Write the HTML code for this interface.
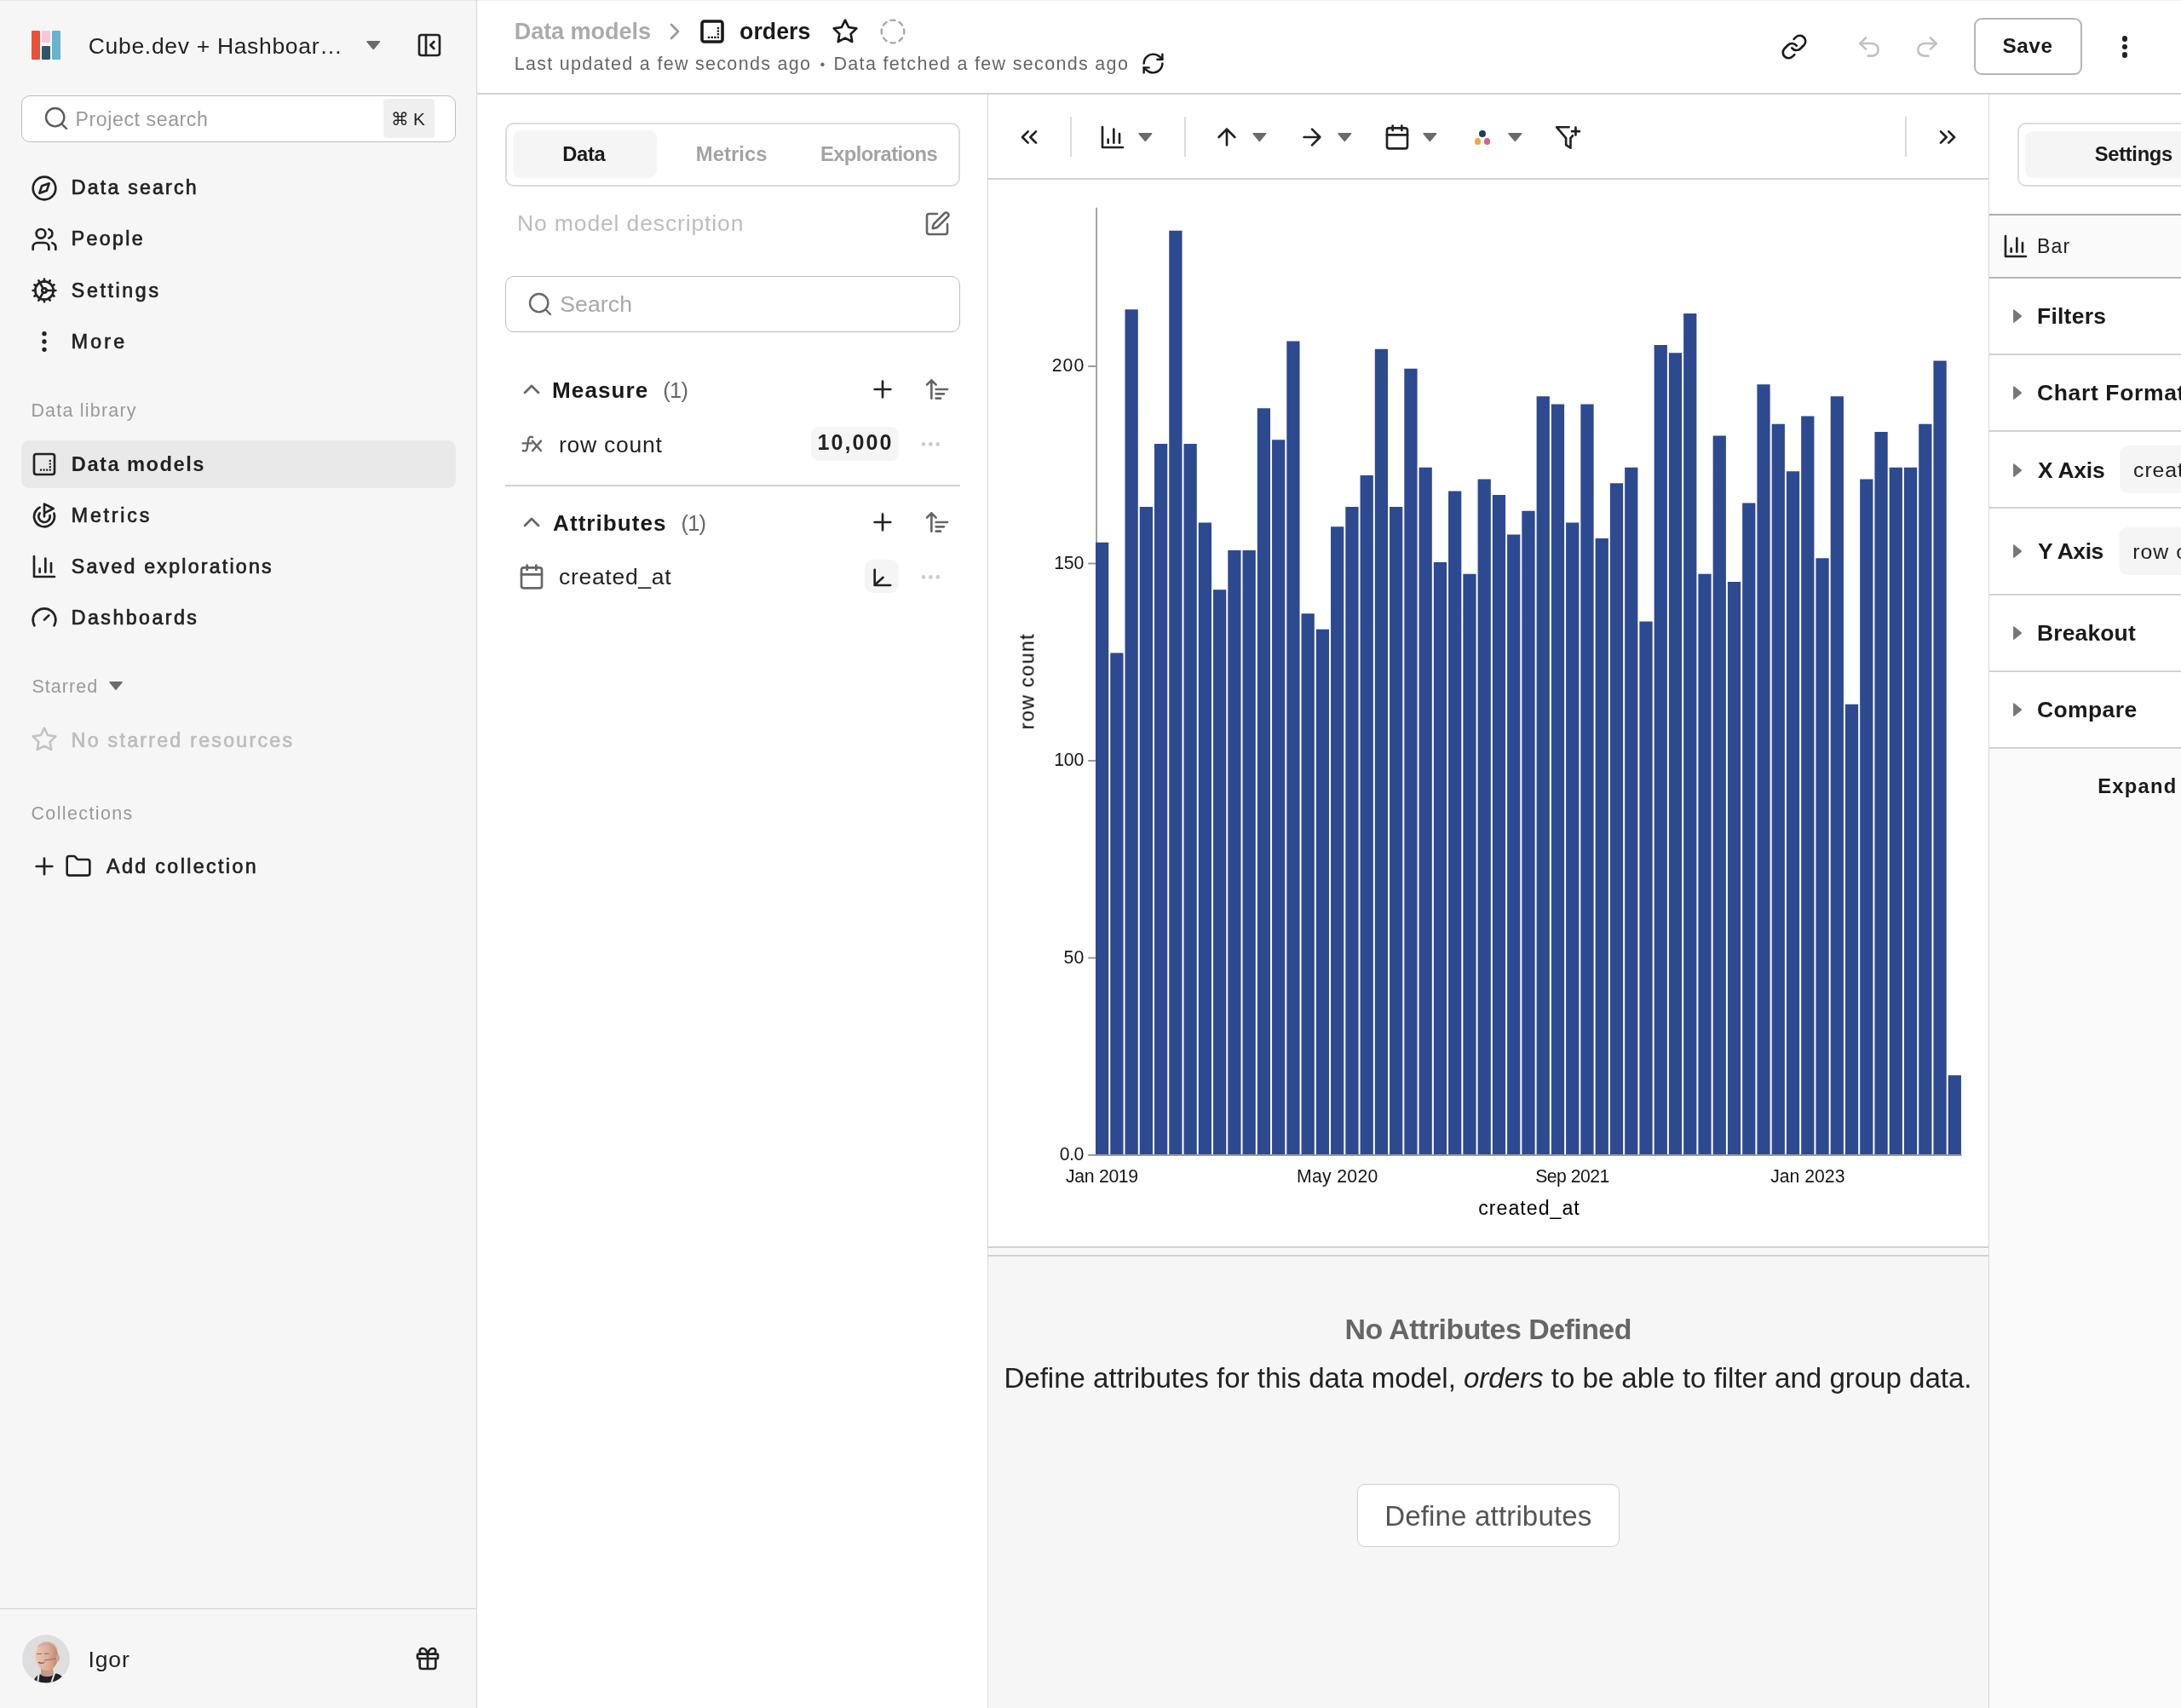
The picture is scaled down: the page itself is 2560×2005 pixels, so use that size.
<!DOCTYPE html>
<html lang="en"><head><meta charset="utf-8"><title>orders – Data models</title>
<style>
html,body{margin:0;padding:0}
body{width:2560px;height:2005px;position:relative;overflow:hidden;background:#fff;font-family:"Liberation Sans","DejaVu Sans",sans-serif;}
body div,body svg,body span{position:absolute}
#app{left:0;top:0;width:2560px;height:2005px;will-change:transform}
.t{white-space:nowrap;line-height:1;}
i{font-style:italic}
</style></head>
<body>
<div id="app">
<div style="left:0px;top:0px;width:559px;height:2005px;background:#f6f6f6"></div>
<div style="left:559px;top:0px;width:1px;height:2005px;background:#d9d9d9"></div>
<div style="left:560px;top:109px;width:2000px;height:2px;background:#d2d2d2"></div>
<div style="left:1159px;top:111px;width:1px;height:1894px;background:#d9d9d9"></div>
<div style="left:2334px;top:111px;width:1px;height:1894px;background:#d9d9d9"></div>
<div style="left:1160px;top:209px;width:1174px;height:2px;background:#d2d2d2"></div>
<div style="left:1160px;top:1463px;width:1174px;height:2px;background:#d2d2d2"></div>
<div style="left:1160px;top:1465px;width:1174px;height:8px;background:#f7f7f7"></div>
<div style="left:1160px;top:1473px;width:1174px;height:2px;background:#d2d2d2"></div>
<div style="left:1160px;top:1475px;width:1174px;height:530px;background:#f6f6f6"></div>
<div style="left:37.1px;top:36px;width:9.8px;height:34px;background:#ea5038;border-radius:1.3px"></div>
<div style="left:49.2px;top:36px;width:9.8px;height:14.3px;background:#f7c6d8;border-radius:1.3px"></div>
<div style="left:49.2px;top:53.7px;width:9.8px;height:16.3px;background:#2e5568;border-radius:1.3px"></div>
<div style="left:61.1px;top:36px;width:9.8px;height:34px;background:#68b3cd;border-radius:1.3px"></div>
<span id="ws" class="t" style="left:103.80px;top:41px;font-size:26.5px;color:#222;letter-spacing:0.677px;">Cube.dev + Hashboar…</span>
<svg style="left:428.8px;top:46.9px" width="18.5" height="12.1" viewBox="-1 -1 18.5 12.1"><path d="M1 0.8H15.5L8.25 9.4Z" fill="#6b6b6b" stroke="#6b6b6b" stroke-width="1.5" stroke-linejoin="round"/></svg>
<svg style="left:488.3px;top:36.9px" width="32" height="32" viewBox="0 0 24 24" fill="none" stroke="#222" stroke-width="2" stroke-linecap="round" stroke-linejoin="round"><rect x="3" y="3" width="18" height="18" rx="2"/><path d="M9 3v18M16 15l-3-3 3-3"/></svg>
<div style="left:24.5px;top:111.5px;width:510px;height:55px;background:#fff;border:1.5px solid #bdbdbd;border-radius:10px;box-sizing:border-box"></div>
<svg style="left:50.1px;top:122.9px" width="32" height="32" viewBox="0 0 24 24" fill="none" stroke="#5c5c5c" stroke-width="1.8" stroke-linecap="round" stroke-linejoin="round"><circle cx="11" cy="11" r="8"/><path d="M21 21l-4.3-4.3"/></svg>
<span id="psearch" class="t" style="left:88.50px;top:129px;font-size:23.18px;color:#9a9a9a;letter-spacing:0.560px;">Project search</span>
<div style="left:450px;top:116.2px;width:60px;height:45.5px;background:#efefef;border-radius:4px"></div>
<span id="cmdk" class="t" style="left:459.00px;top:130px;font-size:20.8px;color:#222;letter-spacing:-0.287px;">⌘ K</span>
<span id="n1" class="t" style="left:83.80px;top:209px;font-size:23.18px;color:#222;-webkit-text-stroke:0.7px currentColor;letter-spacing:2.195px;">Data search</span>
<svg style="left:36.3px;top:204.6px" width="32" height="32" viewBox="0 0 24 24" fill="none" stroke="#222" stroke-width="2" stroke-linecap="round" stroke-linejoin="round"><circle cx="12" cy="12" r="10"/><path d="M16.24 7.76l-2.12 6.36-6.36 2.12 2.12-6.36z"/></svg>
<span id="n2" class="t" style="left:83.80px;top:269px;font-size:23.18px;color:#222;-webkit-text-stroke:0.7px currentColor;letter-spacing:2.327px;">People</span>
<svg style="left:36.3px;top:265.2px" width="32" height="32" viewBox="0 0 24 24" fill="none" stroke="#222" stroke-width="2" stroke-linecap="round" stroke-linejoin="round"><path d="M16 21v-2a4 4 0 0 0-4-4H6a4 4 0 0 0-4 4v2"/><circle cx="9" cy="7" r="4"/><path d="M22 21v-2a4 4 0 0 0-3-3.87M16 3.13a4 4 0 0 1 0 7.75"/></svg>
<span id="n3" class="t" style="left:83.80px;top:330px;font-size:23.18px;color:#222;-webkit-text-stroke:0.7px currentColor;letter-spacing:2.637px;">Settings</span>
<svg style="left:36.3px;top:324.6px" width="32" height="32" viewBox="0 0 24 24" fill="none" stroke="#222" stroke-width="2" stroke-linecap="round" stroke-linejoin="round"><path d="M12 20a8 8 0 1 0 0-16 8 8 0 0 0 0 16z"/><path d="M12 14a2 2 0 1 0 0-4 2 2 0 0 0 0 4z"/><path d="M12 2v2M12 22v-2M17 20.66l-1-1.73M11 10.27L7 3.34M20.66 17l-1.73-1M3.34 7l1.73 1M14 12h8M2 12h2M20.66 7l-1.73 1M3.34 17l1.73-1M17 3.34l-1 1.73M11 13.73l-4 6.93"/></svg>
<span id="n4" class="t" style="left:83.80px;top:390px;font-size:23.18px;color:#222;-webkit-text-stroke:0.7px currentColor;letter-spacing:3.165px;">More</span>
<svg style="left:36.3px;top:384.6px" width="32" height="32" viewBox="0 0 24 24" fill="#222" stroke="#222" stroke-width="2" stroke-linecap="round" stroke-linejoin="round"><circle cx="12" cy="5" r="1"/><circle cx="12" cy="12" r="1"/><circle cx="12" cy="19" r="1"/></svg>
<span id="sec1" class="t" style="left:36.40px;top:472px;font-size:21.53px;color:#999;letter-spacing:1.196px;">Data library</span>
<div style="left:24.5px;top:517px;width:510.5px;height:55.5px;background:#e9e9e9;border-radius:9px"></div>
<span id="n5" class="t" style="left:83.80px;top:534px;font-size:23.74px;color:#222;font-weight:bold;letter-spacing:1.447px;">Data models</span>
<svg style="left:36.3px;top:529px" width="32" height="32" viewBox="0 0 24 24" fill="none" stroke="#222" stroke-width="2" stroke-linecap="round" stroke-linejoin="round"><rect x="3" y="3" width="18" height="18" rx="2"/><path d="M9 17h.01M11.7 17h.01M14.4 17h.01M17.1 17h.01M17.1 14.3h.01M17.1 11.6h.01M17.1 8.9h.01" stroke-linecap="square" stroke-linejoin="miter" stroke-width="1.6"/></svg>
<span id="n6" class="t" style="left:83.80px;top:594px;font-size:23.18px;color:#222;-webkit-text-stroke:0.7px currentColor;letter-spacing:2.804px;">Metrics</span>
<svg style="left:36.3px;top:589px" width="32" height="32" viewBox="0 0 24 24" fill="none" stroke="#222" stroke-width="2" stroke-linecap="round" stroke-linejoin="round"><path d="M12 13V2l8 4-8 4"/><path d="M20.56 10.22a9 9 0 1 1-12.55-5.29"/><path d="M8 10a5 5 0 1 0 8.9 2.02"/></svg>
<span id="n7" class="t" style="left:83.80px;top:654px;font-size:23.18px;color:#222;-webkit-text-stroke:0.7px currentColor;letter-spacing:2.218px;">Saved explorations</span>
<svg style="left:36.3px;top:649px" width="32" height="32" viewBox="0 0 24 24" fill="none" stroke="#222" stroke-width="2" stroke-linecap="round" stroke-linejoin="round"><path d="M3 3v18h18"/><path d="M18 17V9M13 17V5M8 17v-3"/></svg>
<span id="n8" class="t" style="left:83.80px;top:714px;font-size:23.18px;color:#222;-webkit-text-stroke:0.7px currentColor;letter-spacing:2.460px;">Dashboards</span>
<svg style="left:36.3px;top:709px" width="32" height="32" viewBox="0 0 24 24" fill="none" stroke="#222" stroke-width="2" stroke-linecap="round" stroke-linejoin="round"><path d="M12 14l4-4"/><path d="M3.34 19a10 10 0 1 1 17.32 0"/></svg>
<span id="sec2" class="t" style="left:37.40px;top:796px;font-size:21.53px;color:#999;letter-spacing:1.035px;">Starred</span>
<svg style="left:127px;top:799px" width="18" height="12" viewBox="-1 -1 18 12"><path d="M1 0.8H15L8 9.3Z" fill="#6b6b6b" stroke="#6b6b6b" stroke-width="1.5" stroke-linejoin="round"/></svg>
<svg style="left:36px;top:852.4px" width="32" height="32" viewBox="0 0 24 24" fill="none" stroke="#c4c4c4" stroke-width="2" stroke-linecap="round" stroke-linejoin="round"><path d="M12 2l3.09 6.26L22 9.27l-5 4.87 1.18 6.88L12 17.77l-6.18 3.25L7 14.14 2 9.27l6.91-1.01z"/></svg>
<span id="n9" class="t" style="left:83.80px;top:858px;font-size:23.18px;color:#bdbdbd;-webkit-text-stroke:0.7px currentColor;letter-spacing:2.254px;">No starred resources</span>
<span id="sec3" class="t" style="left:36.40px;top:945px;font-size:21.53px;color:#999;letter-spacing:1.372px;">Collections</span>
<svg style="left:36.2px;top:1001px" width="32" height="32" viewBox="0 0 24 24" fill="none" stroke="#222" stroke-width="2" stroke-linecap="round" stroke-linejoin="round"><path d="M5 12h14M12 5v14"/></svg>
<svg style="left:76px;top:1000.6px" width="32" height="32" viewBox="0 0 24 24" fill="none" stroke="#222" stroke-width="2" stroke-linecap="round" stroke-linejoin="round"><path d="M20 20a2 2 0 0 0 2-2V8a2 2 0 0 0-2-2h-7.9a2 2 0 0 1-1.69-.9L9.6 3.9A2 2 0 0 0 7.93 3H4a2 2 0 0 0-2 2v13a2 2 0 0 0 2 2z"/></svg>
<span id="addc" class="t" style="left:125.10px;top:1006px;font-size:23.18px;color:#222;-webkit-text-stroke:0.7px currentColor;letter-spacing:2.401px;">Add collection</span>
<div style="left:0px;top:1888px;width:559px;height:1px;background:#d1d1d1"></div>
<svg style="left:26px;top:1919px" width="56" height="56.6" viewBox="0 0 56 56.6"><defs><clipPath id="avc"><ellipse cx="28" cy="28.3" rx="28" ry="28.3"/></clipPath><linearGradient id="avs" x1="0" x2="1" y1="0" y2="0"><stop offset="0" stop-color="#ecc6b6"/><stop offset="0.55" stop-color="#dcae9b"/><stop offset="1" stop-color="#b98770"/></linearGradient></defs><g clip-path="url(#avc)"><rect width="56" height="57" fill="#dedee0"/><path d="M13 57c1-7 5-10 10-11l12-1c6 0 11 2 13 6l2 6z" fill="#1f2229"/><path d="M22 39h14l1 8c-4 3-11 3-15 0z" fill="#c89883"/><ellipse cx="28.8" cy="25.5" rx="13.3" ry="16.6" fill="url(#avs)"/><path d="M17 16c2-6 8-8.5 13-8 7 .6 11 5 12 11-3-4-7-6-12-6.5-5-.4-10 .7-13 3.500z" fill="#c9a08d" opacity=".55"/><ellipse cx="41.6" cy="27.5" rx="2.3" ry="4" fill="#d3a28e"/><path d="M19.500 32.500c2 1.200 4 1.200 6 .2" stroke="#9c5a4e" stroke-width="1.500" fill="none" stroke-linecap="round"/><path d="M17.500 22.500h5M26 22.300h5" stroke="#8a6657" stroke-width="1.100" fill="none" stroke-linecap="round"/><path d="M26 30l14-2" stroke="#7a5a50" stroke-width=".8" fill="none"/><path d="M19.500 47l-1.500 10M38.500 44l-4.500 13" stroke="#e9e9ec" stroke-width="2" fill="none"/></g></svg>
<span id="igor" class="t" style="left:103.40px;top:1935px;font-size:26.5px;color:#222;letter-spacing:0.920px;">Igor</span>
<svg style="left:486.2px;top:1931.1px" width="32" height="32" viewBox="0 0 24 24" fill="none" stroke="#222" stroke-width="2" stroke-linecap="round" stroke-linejoin="round"><rect x="3" y="8" width="18" height="4" rx="1"/><path d="M12 8v13M19 12v7a2 2 0 0 1-2 2H7a2 2 0 0 1-2-2v-7"/><path d="M7.5 8a2.5 2.5 0 0 1 0-5A4.8 8 0 0 1 12 8a4.8 8 0 0 1 4.5-5 2.5 2.5 0 0 1 0 5"/></svg>
<span id="bc1" class="t" style="left:603.70px;top:23px;font-size:27.14px;color:#ababab;font-weight:bold;letter-spacing:-0.091px;">Data models</span>
<svg style="left:776.1px;top:21.1px" width="32" height="32" viewBox="0 0 24 24" fill="none" stroke="#999" stroke-width="2" stroke-linecap="round" stroke-linejoin="round"><path d="M9 18l6-6-6-6"/></svg>
<svg style="left:820px;top:20.8px" width="32" height="32" viewBox="0 0 24 24" fill="none" stroke="#1a1a1a" stroke-width="2.7" stroke-linecap="round" stroke-linejoin="round"><rect x="3" y="3" width="18" height="18" rx="2"/><path d="M9 17.1h.01M11.8 17.1h.01M14.5 17.1h.01M17.2 17.1h.01M17.2 14.4h.01M17.2 11.7h.01M17.2 9h.01" stroke-linecap="square" stroke-linejoin="miter" stroke-width="1.75"/></svg>
<span id="bc2" class="t" style="left:868.10px;top:24px;font-size:26.71px;color:#1a1a1a;font-weight:bold;letter-spacing:0.029px;">orders</span>
<svg style="left:976.2px;top:21.2px" width="32" height="32" viewBox="0 0 24 24" fill="none" stroke="#1a1a1a" stroke-width="2" stroke-linecap="round" stroke-linejoin="round"><path d="M12 2l3.09 6.26L22 9.27l-5 4.87 1.18 6.88L12 17.77l-6.18 3.25L7 14.14 2 9.27l6.91-1.01z"/></svg>
<svg style="left:1031.9px;top:21px" width="32" height="32" viewBox="0 0 24 24" fill="none" stroke="#a8a8a8" stroke-width="1.8" stroke-linecap="round" stroke-linejoin="round"><path d="M10.1 2.18a10 10 0 0 1 3.8 0M13.9 21.82a10 10 0 0 1-3.8 0M17.61 3.72a10 10 0 0 1 2.69 2.7M2.18 13.9a10 10 0 0 1 0-3.8M20.28 17.61a10 10 0 0 1-2.7 2.69M21.82 10.1a10 10 0 0 1 0 3.8M3.72 6.39a10 10 0 0 1 2.7-2.69M6.39 20.28a10 10 0 0 1-2.69-2.7"/></svg>
<span id="sub1" class="t" style="left:603.70px;top:65px;font-size:21.53px;color:#666;letter-spacing:1.291px;">Last updated a few seconds ago</span>
<span id="subdot" class="t" style="left:962.40px;top:68px;font-size:16.56px;color:#666;">•</span>
<span id="sub2" class="t" style="left:978.50px;top:65px;font-size:21.53px;color:#666;letter-spacing:1.309px;">Data fetched a few seconds ago</span>
<svg style="left:1338.9px;top:59.7px" width="29" height="29" viewBox="0 0 24 24" fill="none" stroke="#1a1a1a" stroke-width="2" stroke-linecap="round" stroke-linejoin="round"><path d="M3 12a9 9 0 0 1 9-9 9.75 9.75 0 0 1 6.74 2.74L21 8"/><path d="M21 3v5h-5"/><path d="M21 12a9 9 0 0 1-9 9 9.75 9.75 0 0 1-6.74-2.74L3 16"/><path d="M8 16H3v5"/></svg>
<svg style="left:2090px;top:38.8px" width="32" height="32" viewBox="0 0 24 24" fill="none" stroke="#1a1a1a" stroke-width="2" stroke-linecap="round" stroke-linejoin="round"><path d="M10 13a5 5 0 0 0 7.54.54l3-3a5 5 0 0 0-7.07-7.07l-1.72 1.71"/><path d="M14 11a5 5 0 0 0-7.54-.54l-3 3a5 5 0 0 0 7.07 7.07l1.71-1.71"/></svg>
<svg style="left:2178px;top:39px" width="32" height="32" viewBox="0 0 24 24" fill="none" stroke="#c2c2c2" stroke-width="2" stroke-linecap="round" stroke-linejoin="round"><path d="M9 14L4 9l5-5"/><path d="M4 9h10.5a5.5 5.5 0 0 1 0 11H11"/></svg>
<svg style="left:2246px;top:39px" width="32" height="32" viewBox="0 0 24 24" fill="none" stroke="#c2c2c2" stroke-width="2" stroke-linecap="round" stroke-linejoin="round"><path d="M15 14l5-5-5-5"/><path d="M20 9H9.5a5.5 5.5 0 0 0 0 11H13"/></svg>
<div style="left:2316.5px;top:21px;width:127px;height:66.5px;background:#fff;border:2px solid #b5b5b5;border-radius:9px;box-sizing:border-box"></div>
<span id="save" class="t" style="left:2350.60px;top:42px;font-size:24.38px;color:#1a1a1a;font-weight:bold;letter-spacing:0.477px;">Save</span>
<div style="left:2490.6px;top:42px;width:6.8px;height:6.8px;background:#222;border-radius:50%"></div>
<div style="left:2490.6px;top:51.6px;width:6.8px;height:6.8px;background:#222;border-radius:50%"></div>
<div style="left:2490.6px;top:61.2px;width:6.8px;height:6.8px;background:#222;border-radius:50%"></div>
<div style="left:592.5px;top:143.5px;width:534px;height:75px;background:#fff;border:2px solid #dcdcdc;border-radius:10px;box-sizing:border-box"></div>
<div style="left:602px;top:153.3px;width:169px;height:55.5px;background:#f5f5f5;border-radius:9px"></div>
<span id="tab1" class="t" style="left:660.30px;top:170px;font-size:23.74px;color:#1a1a1a;font-weight:bold;letter-spacing:-0.381px;">Data</span>
<span id="tab2" class="t" style="left:816.80px;top:170px;font-size:23.74px;color:#a3a3a3;font-weight:bold;letter-spacing:0.082px;">Metrics</span>
<span id="tab3" class="t" style="left:962.90px;top:170px;font-size:23.74px;color:#a3a3a3;font-weight:bold;letter-spacing:-0.541px;">Explorations</span>
<span id="nomodel" class="t" style="left:607.00px;top:249px;font-size:26.5px;color:#bdbdbd;letter-spacing:0.869px;">No model description</span>
<svg style="left:1083.8px;top:246.8px" width="32" height="32" viewBox="0 0 24 24" fill="none" stroke="#646464" stroke-width="1.9" stroke-linecap="round" stroke-linejoin="round"><path d="M12 3H5a2 2 0 0 0-2 2v14a2 2 0 0 0 2 2h14a2 2 0 0 0 2-2v-7"/><path d="M18.375 2.625a1 1 0 0 1 3 3l-9.013 9.014a2 2 0 0 1-.853.505l-2.873.84a.5.5 0 0 1-.62-.62l.84-2.873a2 2 0 0 1 .506-.852z"/></svg>
<div style="left:592.5px;top:323.5px;width:534px;height:66.5px;background:#fff;border:1.5px solid #bdbdbd;border-radius:10px;box-sizing:border-box"></div>
<svg style="left:618.1px;top:341.2px" width="32" height="32" viewBox="0 0 24 24" fill="none" stroke="#686868" stroke-width="1.8" stroke-linecap="round" stroke-linejoin="round"><circle cx="11" cy="11" r="8"/><path d="M21 21l-4.3-4.3"/></svg>
<span id="search2" class="t" style="left:657.20px;top:344px;font-size:26.5px;color:#a8a8a8;letter-spacing:0.175px;">Search</span>
<svg style="left:608px;top:441.2px" width="32" height="32" viewBox="0 0 24 24" fill="none" stroke="#666" stroke-width="2" stroke-linecap="round" stroke-linejoin="round"><path d="M18 15l-6-6-6 6"/></svg>
<span id="meas" class="t" style="left:648.10px;top:445px;font-size:26.08px;color:#1a1a1a;font-weight:bold;letter-spacing:1.048px;">Measure</span>
<span id="measc" class="t" style="left:778.20px;top:446px;font-size:25.46px;color:#666;letter-spacing:-0.716px;">(1)</span>
<svg style="left:1020.1px;top:441.1px" width="32" height="32" viewBox="0 0 24 24" fill="none" stroke="#222" stroke-width="2" stroke-linecap="round" stroke-linejoin="round"><path d="M5 12h14M12 5v14"/></svg>
<svg style="left:1084px;top:441.4px" width="32" height="32" viewBox="0 0 24 24" fill="none" stroke="#666" stroke-width="2" stroke-linecap="round" stroke-linejoin="round"><path d="M3 8l4-4 4 4M7 4v16M11 12h10M11 16h7M11 20h4"/></svg>
<svg style="left:608px;top:506px" width="32" height="32" viewBox="608 506 32 32" fill="none" stroke="#666" stroke-width="2.4" stroke-linecap="round" stroke-linejoin="round"><path d="M625.2 513.3c-2.6-1.3-4.6-.3-5 2.6l-1.5 10.4c-.4 2.7-2.3 3.6-4.9 2.7M613.6 520.4h10.6"/><path d="M625 517.6l10 11.6M635 517.6l-10 11.6"/></svg>
<span id="rowcount" class="t" style="left:656.00px;top:509px;font-size:26.5px;color:#222;letter-spacing:0.747px;">row count</span>
<div style="left:952px;top:501px;width:103px;height:40px;background:#f5f5f5;border-radius:9px"></div>
<span id="tenk" class="t" style="left:959.50px;top:507px;font-size:25.02px;color:#222;font-weight:bold;letter-spacing:2.100px;">10,000</span>
<svg style="left:1077.6px;top:506.5px" width="28.8" height="28.8" viewBox="0 0 24 24" fill="#ccc" stroke="#ccc" stroke-width="2" stroke-linecap="round" stroke-linejoin="round"><circle cx="5" cy="12" r="1"/><circle cx="12" cy="12" r="1"/><circle cx="19" cy="12" r="1"/></svg>
<div style="left:592.5px;top:568.7px;width:534px;height:2px;background:#d2d2d2"></div>
<svg style="left:608px;top:597.2px" width="32" height="32" viewBox="0 0 24 24" fill="none" stroke="#666" stroke-width="2" stroke-linecap="round" stroke-linejoin="round"><path d="M18 15l-6-6-6 6"/></svg>
<span id="attr" class="t" style="left:649.10px;top:601px;font-size:26.08px;color:#1a1a1a;font-weight:bold;letter-spacing:1.018px;">Attributes</span>
<span id="attrc" class="t" style="left:799.50px;top:602px;font-size:25.46px;color:#666;letter-spacing:-0.766px;">(1)</span>
<svg style="left:1020.1px;top:597.1px" width="32" height="32" viewBox="0 0 24 24" fill="none" stroke="#222" stroke-width="2" stroke-linecap="round" stroke-linejoin="round"><path d="M5 12h14M12 5v14"/></svg>
<svg style="left:1084px;top:597.4px" width="32" height="32" viewBox="0 0 24 24" fill="none" stroke="#666" stroke-width="2" stroke-linecap="round" stroke-linejoin="round"><path d="M3 8l4-4 4 4M7 4v16M11 12h10M11 16h7M11 20h4"/></svg>
<svg style="left:608px;top:661.3px" width="32" height="32" viewBox="0 0 24 24" fill="none" stroke="#666" stroke-width="2" stroke-linecap="round" stroke-linejoin="round"><path d="M8 2v4M16 2v4"/><rect x="3" y="4" width="18" height="18" rx="2"/><path d="M3 10h18"/></svg>
<span id="createdat" class="t" style="left:656.00px;top:664px;font-size:26.5px;color:#222;letter-spacing:0.704px;">created_at</span>
<div style="left:1015.3px;top:657.1px;width:39.3px;height:39.4px;background:#f5f5f5;border-radius:9px"></div>
<svg style="left:1019.6px;top:661.2px" width="32" height="32" viewBox="0 0 24 24" fill="none" stroke="#222" stroke-width="2" stroke-linecap="round" stroke-linejoin="round"><path d="M5 5.8V19.5H18.9"/><path d="M5.3 19.2L12.4 12.6"/></svg>
<svg style="left:1077.6px;top:662.5px" width="28.8" height="28.8" viewBox="0 0 24 24" fill="#ccc" stroke="#ccc" stroke-width="2" stroke-linecap="round" stroke-linejoin="round"><circle cx="5" cy="12" r="1"/><circle cx="12" cy="12" r="1"/><circle cx="19" cy="12" r="1"/></svg>
<svg style="left:1192.3px;top:145.3px" width="32" height="32" viewBox="0 0 24 24" fill="none" stroke="#222" stroke-width="2" stroke-linecap="round" stroke-linejoin="round"><path d="M11 17l-5-5 5-5M18 17l-5-5 5-5"/></svg>
<div style="left:1256.2px;top:136.6px;width:1.7px;height:47.1px;background:#dcdcdc"></div>
<svg style="left:1290.2px;top:145.4px" width="32" height="32" viewBox="0 0 24 24" fill="none" stroke="#222" stroke-width="2" stroke-linecap="round" stroke-linejoin="round"><path d="M3 3v18h18"/><path d="M18 17V9M13 17V5M8 17v-3"/></svg>
<svg style="left:1334.6px;top:154.8px" width="18.7" height="12.2" viewBox="-1 -1 18.7 12.2"><path d="M1 0.8H15.7L8.35 9.5Z" fill="#6b6b6b" stroke="#6b6b6b" stroke-width="1.5" stroke-linejoin="round"/></svg>
<div style="left:1390.2px;top:136.6px;width:1.7px;height:47.1px;background:#dcdcdc"></div>
<svg style="left:1424px;top:144.9px" width="32" height="32" viewBox="0 0 24 24" fill="none" stroke="#222" stroke-width="2" stroke-linecap="round" stroke-linejoin="round"><path d="M5 12l7-7 7 7M12 19V5"/></svg>
<svg style="left:1468.8px;top:154.8px" width="18.7" height="12.2" viewBox="-1 -1 18.7 12.2"><path d="M1 0.8H15.7L8.35 9.5Z" fill="#6b6b6b" stroke="#6b6b6b" stroke-width="1.5" stroke-linejoin="round"/></svg>
<svg style="left:1524.3px;top:144.9px" width="32" height="32" viewBox="0 0 24 24" fill="none" stroke="#222" stroke-width="2" stroke-linecap="round" stroke-linejoin="round"><path d="M5 12h14M12 5l7 7-7 7"/></svg>
<svg style="left:1568.6px;top:154.8px" width="18.7" height="12.2" viewBox="-1 -1 18.7 12.2"><path d="M1 0.8H15.7L8.35 9.5Z" fill="#6b6b6b" stroke="#6b6b6b" stroke-width="1.5" stroke-linejoin="round"/></svg>
<svg style="left:1623.7px;top:144.9px" width="32" height="32" viewBox="0 0 24 24" fill="none" stroke="#222" stroke-width="2" stroke-linecap="round" stroke-linejoin="round"><path d="M8 2v4M16 2v4"/><rect x="3" y="4" width="18" height="18" rx="2"/><path d="M3 10h18"/></svg>
<svg style="left:1668.7px;top:154.8px" width="18.7" height="12.2" viewBox="-1 -1 18.7 12.2"><path d="M1 0.8H15.7L8.35 9.5Z" fill="#6b6b6b" stroke="#6b6b6b" stroke-width="1.5" stroke-linejoin="round"/></svg>
<div style="left:1736.1px;top:153.1px;width:7.8px;height:7.8px;background:#1d3f5f;border-radius:50%"></div>
<div style="left:1730.7px;top:162.3px;width:7.8px;height:7.8px;background:#f2a93b;border-radius:50%"></div>
<div style="left:1741.5px;top:162.3px;width:7.8px;height:7.8px;background:#d9608a;border-radius:50%"></div>
<svg style="left:1768.5px;top:154.8px" width="18.7" height="12.2" viewBox="-1 -1 18.7 12.2"><path d="M1 0.8H15.7L8.35 9.5Z" fill="#6b6b6b" stroke="#6b6b6b" stroke-width="1.5" stroke-linejoin="round"/></svg>
<svg style="left:1823.5px;top:145.2px" width="32" height="32" viewBox="0 0 24 24" fill="none" stroke="#222" stroke-width="2" stroke-linecap="round" stroke-linejoin="round"><path d="M13.2 3.2H2.4l8.2 9.7v6l4 2.6v-8.6l1.9-2.2"/><path d="M19.1 3.5v6.7M15.75 6.85h6.7"/></svg>
<div style="left:2236.2px;top:136.6px;width:1.7px;height:47.1px;background:#dcdcdc"></div>
<svg style="left:2269.8px;top:144.9px" width="32" height="32" viewBox="0 0 24 24" fill="none" stroke="#222" stroke-width="2" stroke-linecap="round" stroke-linejoin="round"><path d="M6 17l5-5-5-5M13 17l5-5-5-5"/></svg>
<svg style="left:1161px;top:211px" width="1173" height="1251" viewBox="1161 211 1173 1251"><path d="M1287 243.8V1357M1286 1356H2302.6M1277.2 1356.0H1287M1277.2 1124.5H1287M1277.2 893.0H1287M1277.2 661.5H1287M1277.2 430.0H1287" stroke="#9a9a9a" stroke-width="1.8" fill="none"/><path d="M1286.00 1355.0V636.73h15.25V1355.0zM1303.25 1355.0V766.48h15.25V1355.0zM1320.51 1355.0V363.32h15.25V1355.0zM1337.76 1355.0V595.02h15.25V1355.0zM1355.01 1355.0V520.88h15.25V1355.0zM1372.27 1355.0V270.64h15.25V1355.0zM1389.52 1355.0V520.88h15.25V1355.0zM1406.77 1355.0V613.56h15.25V1355.0zM1424.03 1355.0V692.34h15.25V1355.0zM1441.28 1355.0V646.00h15.25V1355.0zM1458.54 1355.0V646.00h15.25V1355.0zM1475.79 1355.0V479.17h15.25V1355.0zM1493.04 1355.0V516.25h15.25V1355.0zM1510.30 1355.0V400.40h15.25V1355.0zM1527.55 1355.0V720.14h15.25V1355.0zM1544.80 1355.0V738.68h15.25V1355.0zM1562.06 1355.0V618.19h15.25V1355.0zM1579.31 1355.0V595.02h15.25V1355.0zM1596.56 1355.0V557.95h15.25V1355.0zM1613.82 1355.0V409.66h15.25V1355.0zM1631.07 1355.0V595.02h15.25V1355.0zM1648.32 1355.0V432.83h15.25V1355.0zM1665.58 1355.0V548.68h15.25V1355.0zM1682.83 1355.0V659.90h15.25V1355.0zM1700.08 1355.0V576.49h15.25V1355.0zM1717.34 1355.0V673.80h15.25V1355.0zM1734.59 1355.0V562.59h15.25V1355.0zM1751.84 1355.0V581.12h15.25V1355.0zM1769.10 1355.0V627.46h15.25V1355.0zM1786.35 1355.0V599.66h15.25V1355.0zM1803.61 1355.0V465.27h15.25V1355.0zM1820.86 1355.0V474.54h15.25V1355.0zM1838.11 1355.0V613.56h15.25V1355.0zM1855.37 1355.0V474.54h15.25V1355.0zM1872.62 1355.0V632.10h15.25V1355.0zM1889.87 1355.0V567.22h15.25V1355.0zM1907.13 1355.0V548.68h15.25V1355.0zM1924.38 1355.0V729.41h15.25V1355.0zM1941.63 1355.0V405.03h15.25V1355.0zM1958.89 1355.0V414.30h15.25V1355.0zM1976.14 1355.0V367.96h15.25V1355.0zM1993.39 1355.0V673.80h15.25V1355.0zM2010.65 1355.0V511.61h15.25V1355.0zM2027.90 1355.0V683.07h15.25V1355.0zM2045.15 1355.0V590.39h15.25V1355.0zM2062.41 1355.0V451.37h15.25V1355.0zM2079.66 1355.0V497.71h15.25V1355.0zM2096.91 1355.0V553.32h15.25V1355.0zM2114.17 1355.0V488.44h15.25V1355.0zM2131.42 1355.0V655.27h15.25V1355.0zM2148.68 1355.0V465.27h15.25V1355.0zM2165.93 1355.0V826.72h15.25V1355.0zM2183.18 1355.0V562.59h15.25V1355.0zM2200.44 1355.0V506.98h15.25V1355.0zM2217.69 1355.0V548.68h15.25V1355.0zM2234.94 1355.0V548.68h15.25V1355.0zM2252.20 1355.0V497.71h15.25V1355.0zM2269.45 1355.0V423.57h15.25V1355.0zM2286.70 1355.0V1262.32h15.25V1355.0z" fill="#2d4990"/></svg>
<span id="yl0" class="t" style="right:1288.35px;top:1344px;font-size:21.22px;color:#151515;letter-spacing:-0.548px;">0.0</span>
<span id="yl50" class="t" style="right:1287.80px;top:1113px;font-size:21.22px;color:#151515;letter-spacing:-0.001px;">50</span>
<span id="yl100" class="t" style="right:1288.00px;top:881px;font-size:21.22px;color:#151515;letter-spacing:-0.201px;">100</span>
<span id="yl150" class="t" style="right:1288.00px;top:650px;font-size:21.22px;color:#151515;letter-spacing:-0.201px;">150</span>
<span id="yl200" class="t" style="right:1286.80px;top:418px;font-size:21.22px;color:#151515;letter-spacing:0.999px;">200</span>
<span id="xl0" class="t" style="left:293.47px;width:2000px;text-align:center;top:1370px;font-size:21.22px;color:#151515;letter-spacing:-0.316px;">Jan 2019</span>
<span id="xl16" class="t" style="left:569.85px;width:2000px;text-align:center;top:1370px;font-size:21.22px;color:#151515;letter-spacing:0.331px;">May 2020</span>
<span id="xl32" class="t" style="left:845.47px;width:2000px;text-align:center;top:1370px;font-size:21.22px;color:#151515;letter-spacing:-0.536px;">Sep 2021</span>
<span id="xl48" class="t" style="left:1121.79px;width:2000px;text-align:center;top:1370px;font-size:21.22px;color:#151515;letter-spacing:-0.001px;">Jan 2023</span>
<span id="xtitle" class="t" style="left:795.00px;width:2000px;text-align:center;top:1407px;font-size:23.18px;color:#000;letter-spacing:0.993px;">created_at</span>
<span id="ytitle" class="t" style="left:1006.4000000000001px;top:788.11px;width:400px;height:23.18px;text-align:center;font-size:23.18px;color:#000;transform:rotate(-90deg);transform-origin:50% 50%;letter-spacing:1.435px;">row count</span>
<span id="noattr" class="t" style="left:746.74px;width:2000px;text-align:center;top:1544px;font-size:33.92px;color:#666;font-weight:bold;letter-spacing:-0.519px;">No Attributes Defined</span>
<span id="defattr" class="t" style="left:746.48px;width:2000px;text-align:center;top:1601px;font-size:33.12px;color:#222;letter-spacing:-0.040px;">Define attributes for this data model, <i>orders</i> to be able to filter and group data.</span>
<div style="left:1593px;top:1742px;width:308px;height:73.5px;background:#fff;border:1.5px solid #cfcfcf;border-radius:9px;box-sizing:border-box"></div>
<span id="defbtn" class="t" style="left:746.87px;width:2000px;text-align:center;top:1763px;font-size:33.12px;color:#555;letter-spacing:0.135px;">Define attributes</span>
<div style="left:2368px;top:143.5px;width:260px;height:75px;background:#fff;border:2px solid #dcdcdc;border-radius:10px;box-sizing:border-box"></div>
<div style="left:2377px;top:153.5px;width:240px;height:55.5px;background:#f5f5f5;border-radius:9px"></div>
<span id="rset" class="t" style="left:2458.80px;top:170px;font-size:23.74px;color:#1a1a1a;font-weight:bold;letter-spacing:-0.318px;">Settings</span>
<div style="left:2335px;top:251px;width:225px;height:2px;background:#adadad"></div>
<div style="left:2335px;top:253px;width:225px;height:72px;background:#fafafa"></div>
<div style="left:2335px;top:325px;width:225px;height:2px;background:#b7b7b7"></div>
<svg style="left:2349.9px;top:273.4px" width="32" height="32" viewBox="0 0 24 24" fill="none" stroke="#222" stroke-width="2" stroke-linecap="round" stroke-linejoin="round"><path d="M3 3v18h18"/><path d="M18 17V9M13 17V5M8 17v-3"/></svg>
<span id="rbar" class="t" style="left:2391.00px;top:278px;font-size:23.18px;color:#222;letter-spacing:1.079px;">Bar</span>
<svg style="left:2362.2px;top:361.5px" width="12" height="18.2" viewBox="-1 -1 12 18.2"><path d="M0.8 1V15.2L9.4 8.1Z" fill="#777" stroke="#777" stroke-width="1.4" stroke-linejoin="round"/></svg>
<span id="r0" class="t" style="left:2391.00px;top:358px;font-size:26.5px;color:#1a1a1a;font-weight:bold;letter-spacing:0.235px;">Filters</span>
<div style="left:2335px;top:415.2px;width:225px;height:2px;background:#d2d2d2"></div>
<svg style="left:2362.2px;top:451.8px" width="12" height="18.2" viewBox="-1 -1 12 18.2"><path d="M0.8 1V15.2L9.4 8.1Z" fill="#777" stroke="#777" stroke-width="1.4" stroke-linejoin="round"/></svg>
<span id="r1" class="t" style="left:2391.00px;top:448px;font-size:26.5px;color:#1a1a1a;font-weight:bold;letter-spacing:0.632px;">Chart Format</span>
<div style="left:2335px;top:505px;width:225px;height:2px;background:#d2d2d2"></div>
<svg style="left:2362.2px;top:542.7px" width="12" height="18.2" viewBox="-1 -1 12 18.2"><path d="M0.8 1V15.2L9.4 8.1Z" fill="#777" stroke="#777" stroke-width="1.4" stroke-linejoin="round"/></svg>
<span id="r2" class="t" style="left:2392.00px;top:539px;font-size:26.5px;color:#1a1a1a;font-weight:bold;letter-spacing:-0.275px;">X Axis</span>
<div style="left:2335px;top:594.5px;width:225px;height:2px;background:#d2d2d2"></div>
<svg style="left:2362.2px;top:638.3px" width="12" height="18.2" viewBox="-1 -1 12 18.2"><path d="M0.8 1V15.2L9.4 8.1Z" fill="#777" stroke="#777" stroke-width="1.4" stroke-linejoin="round"/></svg>
<span id="r3" class="t" style="left:2392.00px;top:634px;font-size:26.5px;color:#1a1a1a;font-weight:bold;letter-spacing:-0.455px;">Y Axis</span>
<div style="left:2335px;top:696.8px;width:225px;height:2px;background:#d2d2d2"></div>
<svg style="left:2362.2px;top:733.6px" width="12" height="18.2" viewBox="-1 -1 12 18.2"><path d="M0.8 1V15.2L9.4 8.1Z" fill="#777" stroke="#777" stroke-width="1.4" stroke-linejoin="round"/></svg>
<span id="r4" class="t" style="left:2391.00px;top:730px;font-size:26.5px;color:#1a1a1a;font-weight:bold;letter-spacing:0.123px;">Breakout</span>
<div style="left:2335px;top:787px;width:225px;height:2px;background:#d2d2d2"></div>
<svg style="left:2362.2px;top:823.8px" width="12" height="18.2" viewBox="-1 -1 12 18.2"><path d="M0.8 1V15.2L9.4 8.1Z" fill="#777" stroke="#777" stroke-width="1.4" stroke-linejoin="round"/></svg>
<span id="r5" class="t" style="left:2391.00px;top:820px;font-size:26.5px;color:#1a1a1a;font-weight:bold;letter-spacing:0.379px;">Compare</span>
<div style="left:2335px;top:876.7px;width:225px;height:2px;background:#d2d2d2"></div>
<div style="left:2488px;top:522.7px;width:120px;height:56.2px;background:#f5f5f5;border-radius:10px"></div>
<span id="bx" class="t" style="left:2504.10px;top:540px;font-size:24.84px;color:#222;letter-spacing:0.9px;">created_at</span>
<div style="left:2486.6px;top:618.8px;width:120px;height:56.2px;background:#f5f5f5;border-radius:10px"></div>
<span id="by" class="t" style="left:2503.30px;top:636px;font-size:24.84px;color:#222;letter-spacing:1px;">row count</span>
<div style="left:2335px;top:878.7px;width:225px;height:1127px;background:#fafafa"></div>
<span id="expand" class="t" style="left:2462.30px;top:912px;font-size:23.74px;color:#1a1a1a;font-weight:bold;letter-spacing:1.235px;">Expand</span>
<div style="left:0px;top:0px;width:2560px;height:1px;background:rgba(0,0,0,0.055)"></div>
</div>
</body></html>
